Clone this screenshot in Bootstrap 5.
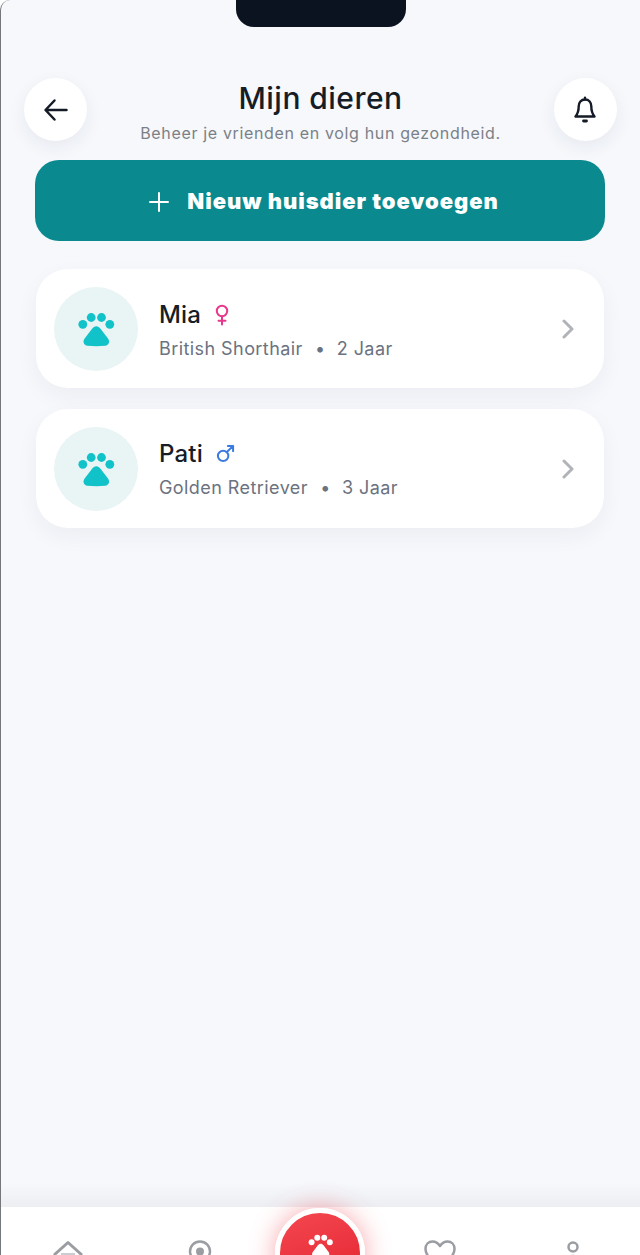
<!DOCTYPE html>
<html lang="nl">
<head>
<meta charset="UTF-8">
<title>Mijn dieren</title>
<link href="https://cdn.jsdelivr.net/npm/bootstrap@5.3.0/dist/css/bootstrap.min.css" rel="stylesheet">
<style>
html, body { height: 1255px; overflow: hidden; background: #fff; }
body { font-family: Inter, "Liberation Sans", sans-serif; color: #161d26; }
.phone { height: 1255px; background: #f6f8fc; border-left: 1px solid #74777c; border-top-left-radius: 10px; overflow: hidden; }
.notch { position: absolute; top: 0; left: 235px; width: 170px; height: 27px; background: #0b1220; border-radius: 0 0 18px 18px; }
.top-area { padding: 78px 23px 0 23px; }
.round-btn { width: 63px; height: 63px; background: #fff; box-shadow: 0 6px 18px rgba(30,40,60,.07); flex: none; }
.page-title { font-size: 30px; font-weight: 500; line-height: 40px; letter-spacing: .45px; margin: 0; }
.page-sub { font-size: 16px; line-height: 20px; letter-spacing: .65px; color: #7b8087; margin: 5px 0 0; white-space: nowrap; }
.add-btn { margin: 17px 0 0 34px; width: 570px; height: 81px; padding: 2px 0 0 8px; background: #0a8a8f; border-radius: 24px; color: #fff; font-size: 22px; font-weight: 900; letter-spacing: .95px; gap: 18px; border: 0; }
.add-btn:hover { background: #0a8a8f; color: #fff; }
.pet-list { padding: 28px 36px 0 35px; gap: 21px; }
.pet-row { height: 119px; background: #fff; border-radius: 32px; padding: 0 29px 0 18px; box-shadow: 0 8px 22px rgba(30,40,60,.05); }
.pet-avatar { width: 84px; height: 84px; background: #e9f4f5; flex: none; }
.pet-text { margin-left: 21px; padding-top: 2px; }
.pet-row + .pet-row .pet-text { padding-top: 0; }
.pet-name { font-size: 24px; font-weight: 500; line-height: 30px; letter-spacing: .2px; color: #161d26; gap: 13px; }
.pet-meta { font-size: 18px; line-height: 22px; letter-spacing: .43px; color: #6b7280; margin-top: 8px; }
.pet-dot { margin: 0 12px 0 13px; font-weight: 700; }
.shade { height: 24px; background: linear-gradient(to bottom, rgba(225,228,234,0), #eceef2); }
.bottom-nav { height: 48px; background: #fff; display: grid; grid-template-columns: 133px 132px 108px 132px 134px; flex: none; }
.nav-cell { padding-top: 33px; }
.center-btn { width: 90px; height: 90px; margin-top: 1px; background: linear-gradient(160deg, #f4474f, #e2222f); border: 5px solid #fff; box-shadow: 0 0 26px rgba(240,60,70,.45); flex: none; padding-top: 19px; }
</style>
</head>
<body>
<div class="phone d-flex flex-column position-relative">
  <div class="notch"></div>

  <div class="flex-grow-1">
    <div class="top-area">
      <div class="d-flex justify-content-between">
        <div class="round-btn rounded-circle d-flex align-items-center justify-content-center">
          <svg width="26" height="24" viewBox="0 0 26 24" fill="none" stroke="#151b26" stroke-width="2.5" stroke-linecap="round" stroke-linejoin="round"><path d="M23.5 12H3M11.5 2.5 2.5 12l9 9.5"/></svg>
        </div>
        <div class="text-center">
          <h1 class="page-title">Mijn dieren</h1>
          <p class="page-sub">Beheer je vrienden en volg hun gezondheid.</p>
        </div>
        <div class="round-btn rounded-circle d-flex align-items-center justify-content-center">
          <svg width="24" height="28" viewBox="0 0 24 28" fill="none" stroke="#151b26" stroke-width="2.4" stroke-linecap="round" stroke-linejoin="round"><path d="M12 3.5c-4 0-6.3 3-6.3 6.8 0 6-1.5 8.2-3.2 10.2h19c-1.7-2-3.2-4.2-3.2-10.2 0-3.8-2.3-6.8-6.3-6.8Z"/><path d="M12 1.8v1.7"/><path d="M10.5 25h3" stroke-width="2.8"/></svg>
        </div>
      </div>
    </div>

    <button type="button" class="btn add-btn d-flex align-items-center justify-content-center">
      <svg width="20" height="20" viewBox="0 0 20 20" fill="none" stroke="#fff" stroke-width="2" stroke-linecap="round"><path d="M10 1v18M1 10h18"/></svg>
      <span>Nieuw huisdier toevoegen</span>
    </button>

    <div class="pet-list d-flex flex-column">
      <div class="pet-row d-flex align-items-center">
        <div class="pet-avatar rounded-circle d-flex align-items-center justify-content-center">
          <svg width="40" height="40" viewBox="0 0 40 40" fill="#12c2c9"><circle cx="6.8" cy="15.3" r="4.4"/><circle cx="15.2" cy="8.5" r="4.4"/><circle cx="25.5" cy="8.5" r="4.4"/><circle cx="33.8" cy="15.3" r="4.4"/><path d="M20.3 17.3c1.8 0 3 1 4.2 2.5l7.5 9.7c2.2 3 1 6.8-2.8 7.3-5.8.6-12 .6-17.8 0-3.8-.5-5-4.3-2.8-7.3l7.5-9.7c1.2-1.5 2.4-2.5 4.2-2.5Z"/></svg>
        </div>
        <div class="pet-text flex-grow-1">
          <div class="pet-name d-flex align-items-center">
            <span>Mia</span>
            <svg width="16" height="22" viewBox="0 0 16 22" fill="none" stroke="#e7378f" stroke-width="2" stroke-linecap="round"><circle cx="8" cy="7" r="5.2"/><path d="M8 12.2V20.5M4.5 16.8h7"/></svg>
          </div>
          <div class="pet-meta"><span>British Shorthair</span><span class="pet-dot">•</span><span>2 Jaar</span></div>
        </div>
        <svg width="14" height="20" viewBox="0 0 14 20" fill="none" stroke="#b0b3b7" stroke-width="3" stroke-linecap="round" stroke-linejoin="round"><path d="M3 2l8 8-8 8"/></svg>
      </div>

      <div class="pet-row d-flex align-items-center">
        <div class="pet-avatar rounded-circle d-flex align-items-center justify-content-center">
          <svg width="40" height="40" viewBox="0 0 40 40" fill="#12c2c9"><circle cx="6.8" cy="15.3" r="4.4"/><circle cx="15.2" cy="8.5" r="4.4"/><circle cx="25.5" cy="8.5" r="4.4"/><circle cx="33.8" cy="15.3" r="4.4"/><path d="M20.3 17.3c1.8 0 3 1 4.2 2.5l7.5 9.7c2.2 3 1 6.8-2.8 7.3-5.8.6-12 .6-17.8 0-3.8-.5-5-4.3-2.8-7.3l7.5-9.7c1.2-1.5 2.4-2.5 4.2-2.5Z"/></svg>
        </div>
        <div class="pet-text flex-grow-1">
          <div class="pet-name d-flex align-items-center">
            <span>Pati</span>
            <svg width="19" height="19" viewBox="0 0 20 20" fill="none" stroke="#3b7be0" stroke-width="2.1" stroke-linecap="round" stroke-linejoin="round"><circle cx="7.5" cy="12.5" r="5.5"/><path d="M11.5 8.5 18 2M12.5 2H18v5.5"/></svg>
          </div>
          <div class="pet-meta"><span>Golden Retriever</span><span class="pet-dot">•</span><span>3 Jaar</span></div>
        </div>
        <svg width="14" height="20" viewBox="0 0 14 20" fill="none" stroke="#b0b3b7" stroke-width="3" stroke-linecap="round" stroke-linejoin="round"><path d="M3 2l8 8-8 8"/></svg>
      </div>
    </div>
  </div>

  <div class="shade"></div>
  <nav class="bottom-nav">
    <div class="nav-cell d-flex justify-content-center">
      <svg width="32" height="32" viewBox="0 0 32 32" fill="none" stroke="#9a9da2" stroke-width="3" stroke-linejoin="round"><path d="M2 15 16 2.5 30 15"/><path d="M9 14.5h14" stroke="#c9ccd0"/></svg>
    </div>
    <div class="nav-cell d-flex justify-content-center">
      <svg width="24" height="32" viewBox="0 0 24 32" fill="none" stroke="#9a9da2" stroke-width="2.5"><path d="M12 1.5c5.500 0 10 4.500 10 10 0 6-6 12-10 16-4-4-10-10-10-16 0-5.500 4.500-10 10-10Z"/><circle cx="12" cy="11.5" r="4" fill="#9a9da2" stroke="none"/></svg>
    </div>
    <div class="d-flex justify-content-center">
      <div class="center-btn rounded-circle d-flex justify-content-center">
        <svg width="27" height="27" viewBox="0 0 40 40" fill="#fff"><circle cx="6.8" cy="15.3" r="4.4"/><circle cx="15.2" cy="8.5" r="4.4"/><circle cx="25.5" cy="8.5" r="4.4"/><circle cx="33.8" cy="15.3" r="4.4"/><path d="M20.3 17.3c1.8 0 3 1 4.2 2.5l7.5 9.7c2.2 3 1 6.8-2.8 7.3-5.8.6-12 .6-17.8 0-3.8-.5-5-4.3-2.8-7.3l7.5-9.7c1.2-1.5 2.4-2.5 4.2-2.5Z"/></svg>
      </div>
    </div>
    <div class="nav-cell d-flex justify-content-center">
      <svg width="32" height="30" viewBox="0 0 32 30" fill="none" stroke="#9a9da2" stroke-width="2.5" stroke-linejoin="round"><path d="M16 6c2-3 4.500-4.500 7.500-4.500 4 0 7 3 7 7.500 0 7-8 13-14.500 19C9.500 22 1.500 16 1.500 9c0-4.500 3-7.500 7-7.500C11.500 1.500 14 3 16 6Z"/></svg>
    </div>
    <div class="nav-cell d-flex justify-content-center">
      <svg width="28" height="32" viewBox="0 0 28 32" fill="none" stroke="#9a9da2" stroke-width="2.5"><circle cx="14" cy="7" r="4.5"/><path d="M3 28c0-8 5-12 11-12s11 4 11 12"/></svg>
    </div>
  </nav>
</div>
<script src="https://cdn.jsdelivr.net/npm/bootstrap@5.3.0/dist/js/bootstrap.bundle.min.js"></script>
</body>
</html>
